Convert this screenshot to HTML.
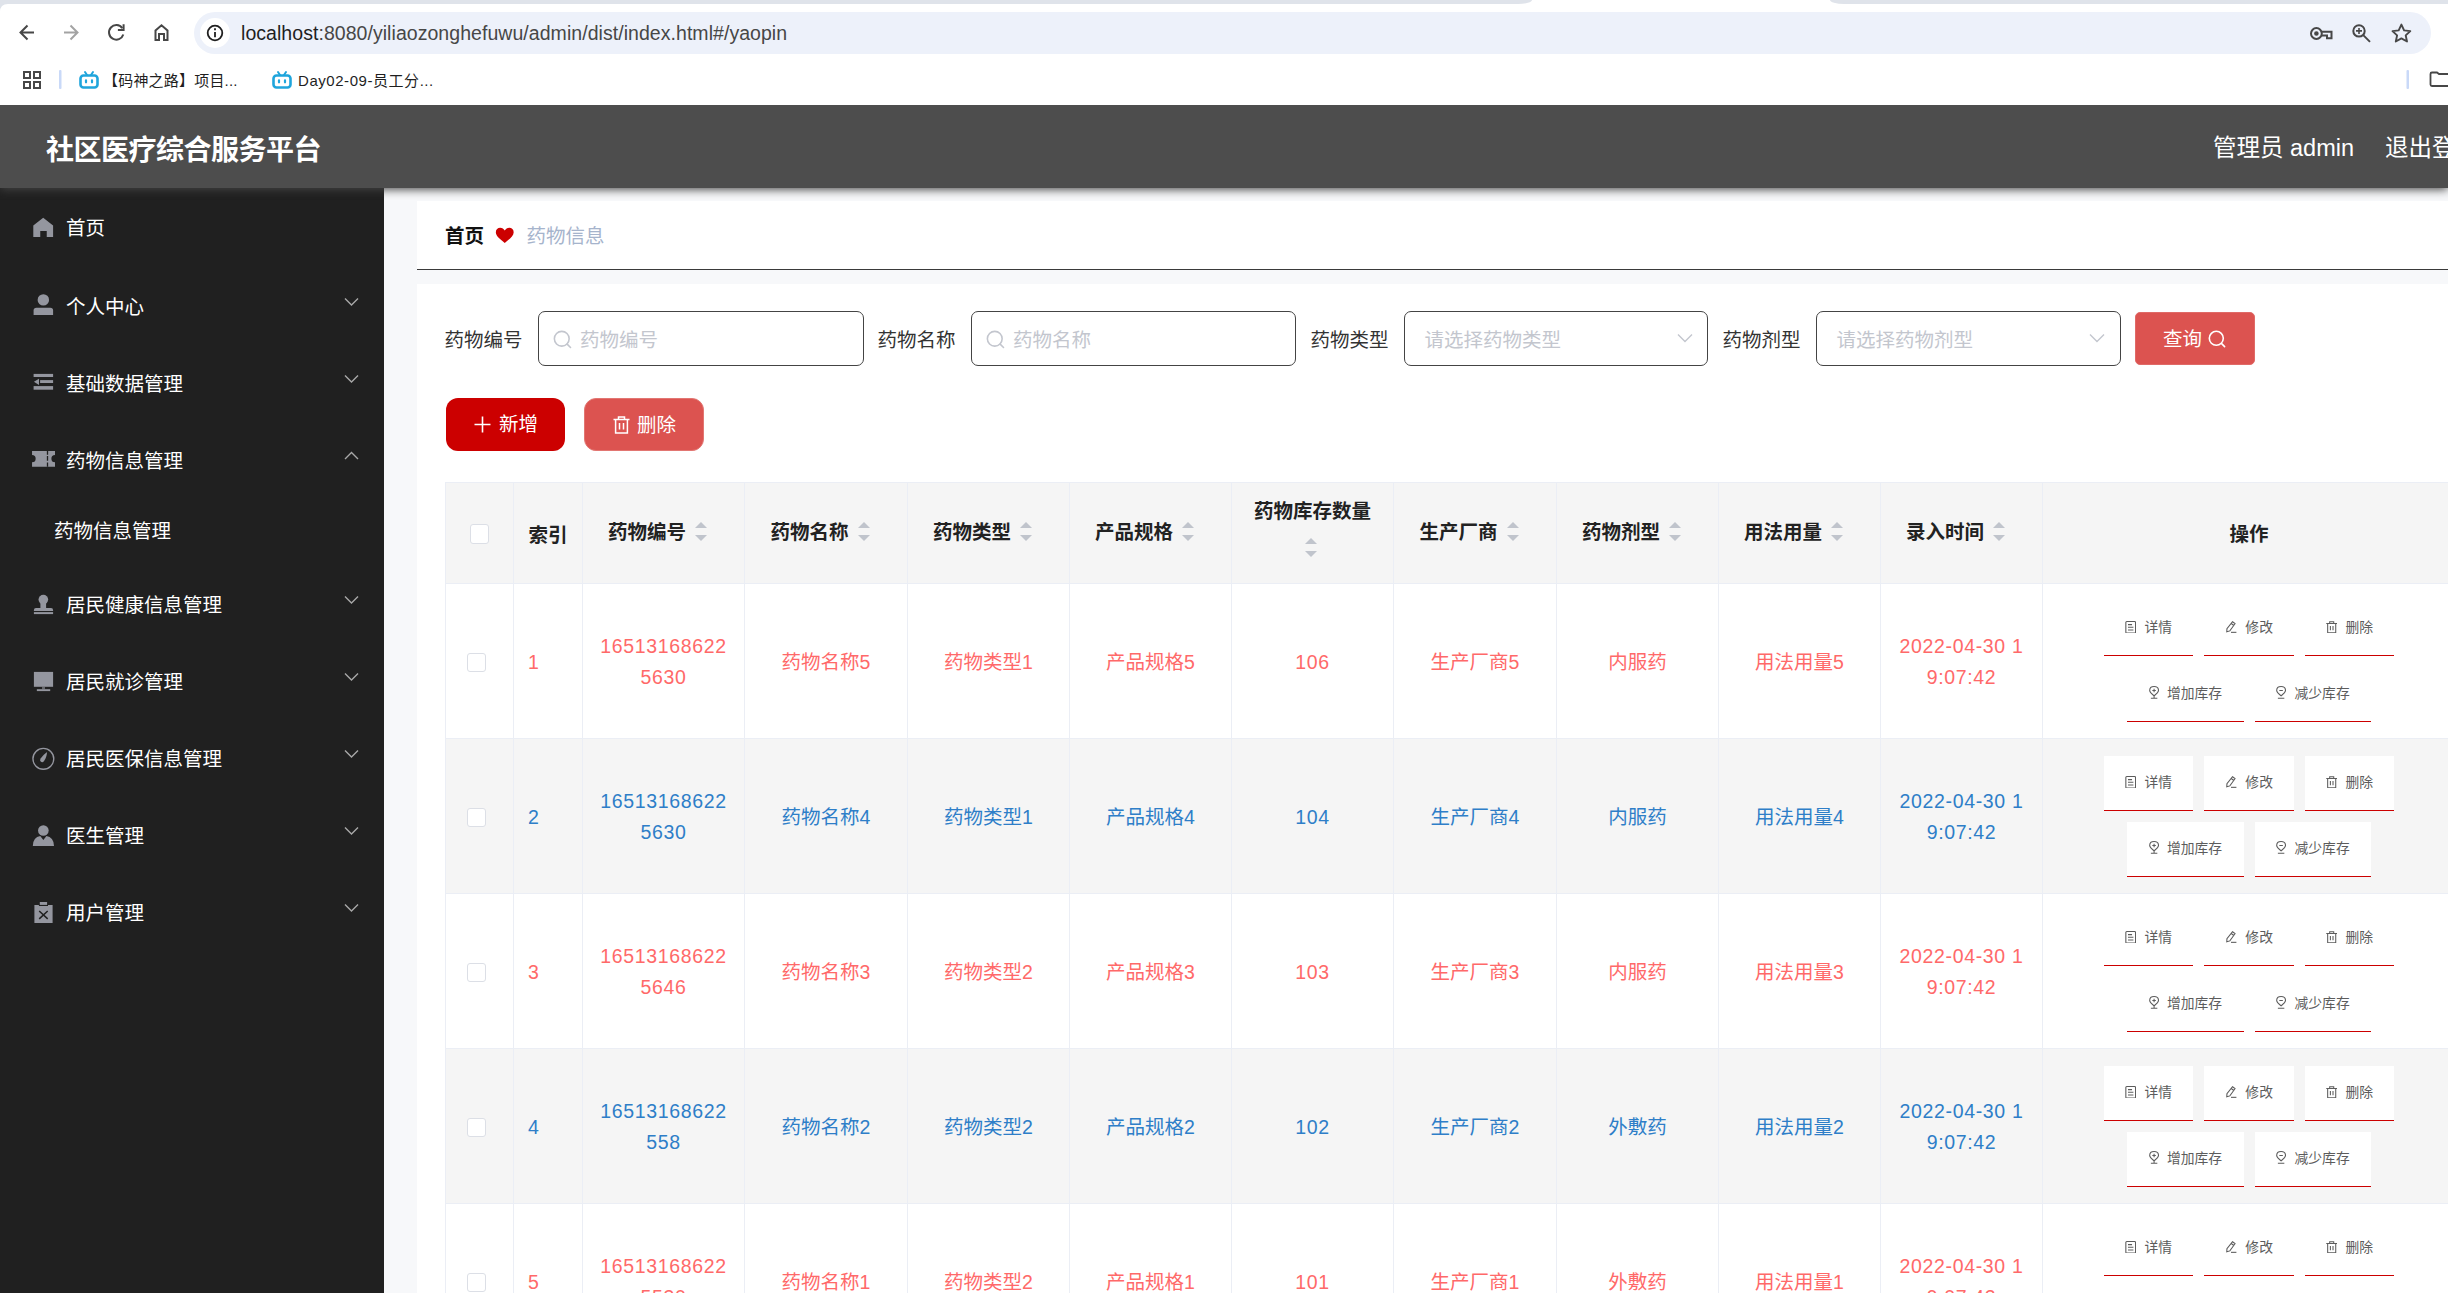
<!DOCTYPE html><html lang="zh-CN"><head><meta charset="utf-8"><title>社区医疗综合服务平台</title><style>
*{box-sizing:border-box;margin:0;padding:0}
html,body{width:2448px;height:1293px;overflow:hidden;background:#f7f8fa;font-family:"Liberation Sans","Noto Sans CJK SC",sans-serif;}
body{position:relative}
.abs{position:absolute}
/* browser chrome */
#strip{left:0;top:0;width:1532px;height:4px;background:#dfe3ea;border-bottom-right-radius:14px 4px}
#strip2{left:1830px;top:0;width:618px;height:4px;background:#dfe3ea;border-bottom-left-radius:14px 4px}
#chrome{left:0;top:0;width:2448px;height:105px;background:#fff}
#tabgap{left:1530px;top:0;width:300px;height:4px;background:#fff}
#pill{left:194px;top:12px;width:2236.5px;height:42px;border-radius:21px;background:#edf1fa}
#infoc{left:200px;top:18px;width:30px;height:30px;border-radius:15px;background:#fff}
#url{left:241px;top:20px;font-size:19.5px;line-height:26px;color:#1f1f1f;white-space:nowrap;letter-spacing:0.05px}
#url span{color:#474747}
.bm{font-size:15px;line-height:20px;color:#1f1f1f;white-space:nowrap;top:71px;letter-spacing:0.2px}
/* app */
#hdr{left:0;top:105px;width:2448px;height:83px;background:#4d4d4d;box-shadow:0 1.5px 9px #444;clip-path:inset(0 0 -30px 0);z-index:5}
#title{left:46px;top:128.5px;font-size:28px;line-height:44px;font-weight:bold;color:#fff;white-space:nowrap;z-index:6;letter-spacing:-0.5px}
#user{left:2213px;top:130px;font-size:23.5px;line-height:36px;color:#fff;white-space:nowrap;z-index:6}
#logout{left:2385px;top:130px;font-size:23.5px;line-height:36px;color:#fff;white-space:nowrap;z-index:6}
#side{left:0;top:188px;width:384px;height:1105px;background:#202020}
.mi{position:absolute;left:0;width:384px;height:77px;color:#fff;font-size:19.5px;line-height:77px;white-space:nowrap}
.mi .tx{position:absolute;left:66px;top:0}
.mi svg.ic{position:absolute;left:32px;top:28px;width:22px;height:22px}
.mi svg.ch{position:absolute;left:344px;top:28px;width:15px;height:10px}
#bc{left:417px;top:201px;width:2031px;height:69px;background:#fff;border-bottom:1px solid #3a3a3a}
#card{left:417px;top:284px;width:2031px;height:1009px;background:#fff}
.t195{font-size:19.5px;white-space:nowrap;line-height:28px}
.inp{position:absolute;top:311px;height:55px;border:1px solid #444;border-radius:7px;background:#fff}
.lbl{position:absolute;top:326px;font-size:19.5px;line-height:28px;color:#333;white-space:nowrap}
.ph{position:absolute;top:14px;font-size:19.5px;line-height:28px;color:#c3c6ce;white-space:nowrap}
.btn{position:absolute;color:#fff;font-size:19.5px;white-space:nowrap}

#tbl{left:445px;top:482px;width:2012px;border-top:1px solid #ebeef5;border-left:1px solid #ebeef5}
.tr{display:flex;width:2012px}
.tr.th{height:101px;background:#f5f5f5}
.tr.odd,.tr.even{height:155px}
.tr.odd{background:#fff;color:#ff6969}
.tr.even{background:#f5f5f5;color:#2e7ec8}
.td{border-right:1px solid #ebeef5;border-bottom:1px solid #ebeef5;display:flex;align-items:center;justify-content:center;text-align:center;flex:none;height:100%}
.td.c0{width:68px}
.td.c1{width:69px}
.td.c1.l{justify-content:flex-start;padding-left:14px}
.td.c1 .ht{padding-top:3px}
.td.cop .ht{padding-top:2px}
.td.cn{width:162px}
.td.w3{width:163px}
.td.cop{width:412.8px}
.ht{font-size:19.5px;font-weight:bold;color:#222;line-height:32px;white-space:nowrap}
.hc{display:inline-flex;align-items:center;padding-bottom:3px}
.hc2{display:flex;flex-direction:column;align-items:center;padding-bottom:1px}
.hc2 .cw{margin-top:-5px;top:1.5px}
.hc2 .ht{position:relative;top:-1.5px}
.cw{display:inline-flex;flex-direction:column;align-items:center;width:33px;height:46px;vertical-align:middle;position:relative}
.cw i{position:absolute;left:9.2px;width:0;height:0;border:6px solid transparent}
.cw i.up{border-bottom-color:#c0c4cc;top:7px}
.cw i.dn{border-top-color:#c0c4cc;top:26px}
.ct{font-size:19.5px;line-height:31px;padding-top:2px;display:block}
.ct.num{letter-spacing:0.65px}
.th .cb{margin-top:2px}
.cb{display:inline-block;width:19.5px;height:19.5px;border:1px solid #dcdfe6;border-radius:3px;background:#fff}
.ops{width:100%}
.l1,.l2{display:flex;justify-content:center;gap:10.8px}
.ops{padding-top:1.2px}
.l2{margin-top:10.9px}
.ab{display:inline-flex;align-items:center;justify-content:center;height:55.2px;background:#fff;border-bottom:1.5px solid #cc0000;font-size:13.8px;color:#5c5c5c;white-space:nowrap}
.ab svg{margin-right:8.3px;flex:none;position:relative;top:-1.2px}
.ab span{position:relative;top:-2px}
</style></head><body>
<div id="chrome" class="abs"></div><div id="strip" class="abs"></div><div id="strip2" class="abs"></div>
<div id="pill" class="abs"></div><div id="infoc" class="abs"></div><div id="url" class="abs">localhost<span>:8080/yiliaozonghefuwu/admin/dist/index.html#/yaopin</span></div><div class="bm abs" style="left:103px">【码神之路】项目...</div><div class="bm abs" style="left:298px;letter-spacing:0.55px">Day02-09-员工分...</div>
<svg class="abs" style="left:0;top:0" width="2448" height="105" viewBox="0 0 2448 105" fill="none">
<path d="M8 4 Q0 4 0 12 L0 4 Z" fill="#dfe3ea"/>
<g stroke="#474747" stroke-width="2" stroke-linecap="butt" stroke-linejoin="miter">
<path d="M34 32.5 H21 M27.5 25.5 L20.5 32.5 L27.5 39.5"/>
<path d="M64 32.5 H77 M70.5 25.5 L77.5 32.5 L70.5 39.5" stroke="#a3a3a3"/>
<path d="M122.3 28.2 A7.3 7.3 0 1 0 123.3 34.5"/>
<path d="M123.6 24.3 V30 H117.9" />
<path d="M155.5 40 V30.5 L161.5 25.3 L167.5 30.5 V40 H164 V34 H159 V40 Z"/>
</g>
<g stroke="#1f1f1f" stroke-width="1.8">
<circle cx="215" cy="33" r="7.3"/>
<path d="M215 32 V37.2"/><path d="M215 28.3 V30.3"/>
</g>
<!-- key -->
<g stroke="#474747" stroke-width="2">
<circle cx="2316.4" cy="33.5" r="5.4"/><circle cx="2316.4" cy="33.5" r="1.3" fill="#474747"/>
<path d="M2321.6 31.7 H2331.5 V38.3 H2327 V35.5 H2321.6"/>
</g>
<!-- zoom -->
<g stroke="#474747" stroke-width="2">
<circle cx="2359" cy="30.9" r="5.7"/><path d="M2363 34.9 L2370 41.9"/><path d="M2356 30.9 H2362 M2359 27.9 V33.9" stroke-width="1.6"/>
</g>
<!-- star -->
<path d="M2401.4 24.6 L2404.1 30.4 L2410.3 31.1 L2405.7 35.4 L2407 41.5 L2401.4 38.4 L2395.8 41.5 L2397.1 35.4 L2392.5 31.1 L2398.7 30.4 Z" stroke="#474747" stroke-width="1.9" stroke-linejoin="round"/>
<!-- apps grid -->
<g stroke="#474747" stroke-width="2">
<rect x="24" y="72" width="6" height="6"/><rect x="34" y="72" width="6" height="6"/><rect x="24" y="82" width="6" height="6"/><rect x="34" y="82" width="6" height="6"/>
</g>
<rect x="59" y="70" width="2.5" height="19" rx="1" fill="#c9d9f8"/>
<rect x="2406.5" y="70" width="2.5" height="19" rx="1" fill="#c9d9f8"/>
<!-- folder -->
<path d="M2450 74 H2439 L2437 72.5 H2432 Q2430.5 72.5 2430.5 74 V84.5 Q2430.5 86 2432 86 H2450" stroke="#474747" stroke-width="1.8"/>
<!-- bilibili icons -->
<g id="bili1" stroke="#1fa5dc" stroke-width="2.6" stroke-linejoin="round" stroke-linecap="round">
<rect x="80.5" y="75.5" width="17" height="12" rx="3"/>
<path d="M85 72 L87 75 M93 72 L91 75" stroke-width="2"/>
<path d="M86 80.3 V82.3 M92 80.3 V82.3" stroke-width="2.2"/>
</g>
<g stroke="#1fa5dc" stroke-width="2.6" stroke-linejoin="round" stroke-linecap="round" transform="translate(193 0)">
<rect x="80.5" y="75.5" width="17" height="12" rx="3"/>
<path d="M85 72 L87 75 M93 72 L91 75" stroke-width="2"/>
<path d="M86 80.3 V82.3 M92 80.3 V82.3" stroke-width="2.2"/>
</g>
</svg>
<div id="hdr" class="abs"></div>
<div id="title" class="abs">社区医疗综合服务平台</div>
<div id="user" class="abs">管理员 admin</div><div id="logout" class="abs">退出登录</div>
<div id="side" class="abs"><svg class="abs" style="left:0;top:0" width="384" height="1105" viewBox="0 188 384 1105">
<g fill="#94969f">
<path d="M33.3 237.1 V225.5 L43.2 217.7 L53.1 225.5 V237.1 H46.75 V231 H40.25 V237.1 Z"/>
<circle cx="43.35" cy="299.9" r="5.7"/>
<path d="M33.6 315 V310.5 Q33.6 307.75 36.4 307.75 H50.3 Q53.1 307.75 53.1 310.5 V315 Z"/>
<rect x="33.6" y="373.9" width="19.5" height="3.1"/><rect x="40.1" y="380.1" width="13" height="2.9"/><rect x="33.6" y="386.1" width="19.5" height="3.6"/>
<path d="M33.9 381.8 L39 378.7 V384.9 Z"/>
<path d="M32.05 450.9 H55 V455.1 A3.6 3.6 0 0 0 55 462.3 V466.7 H32.05 V462.3 A3.6 3.6 0 0 0 32.05 455.1 Z"/>
<circle cx="43.35" cy="599.55" r="4.8"/>
<path d="M40.4 602 H46.1 V608.1 H51 Q53.1 608.1 53.1 610.2 V611 H33.9 V610.2 Q33.9 608.1 36 608.1 H40.4 Z"/>
<rect x="33.9" y="612.1" width="19.2" height="2"/>
<rect x="33.9" y="671.9" width="19.2" height="14.9"/><rect x="42" y="686.8" width="3" height="2.4" opacity="0.6"/><rect x="36.85" y="689.2" width="13.35" height="1.9"/>
<path d="M47.1 752 Q46.5 758 43.9 761.2 Q42.4 762.9 40.7 761.6 Q39.4 760.3 40.6 758.4 Q43 755 47.1 752 Z"/>
<circle cx="43.35" cy="830.55" r="5.3"/>
<path d="M32.8 846 Q33.2 837 40.25 836.1 L43.35 840 L46.45 836.1 Q53.6 837 54 846 Z"/>
<path d="M34.4 904.9 H38.9 V906 H48 V904.9 H52.6 V923 H34.4 Z"/>
<rect x="39.8" y="902" width="7.3" height="2.9"/>
</g>
<circle cx="43.35" cy="758.8" r="10.4" fill="none" stroke="#94969f" stroke-width="1.4"/>
<path d="M47.5 450.9 V454.8 M47.5 456 V460.7 M47.5 462.5 V466.7" stroke="#202020" stroke-width="1.3"/>
<path d="M39.2 911 L47.7 918.85 M47.7 911 L39.2 918.85" stroke="#202020" stroke-width="1.5"/>
</svg>
<div class="mi" style="top:1.5px"><span class="tx">首页</span></div>
<div class="mi" style="top:80.5px"><span class="tx">个人中心</span><svg class="ch" viewBox="0 0 15 10"><path d="M1 1.5 L7.5 8 L14 1.5" fill="none" stroke="#a8a8a8" stroke-width="1.4"/></svg></div>
<div class="mi" style="top:157.5px"><span class="tx">基础数据管理</span><svg class="ch" viewBox="0 0 15 10"><path d="M1 1.5 L7.5 8 L14 1.5" fill="none" stroke="#a8a8a8" stroke-width="1.4"/></svg></div>
<div class="mi" style="top:234.5px"><span class="tx">药物信息管理</span><svg class="ch" viewBox="0 0 15 10"><path d="M1 8 L7.5 1.5 L14 8" fill="none" stroke="#a8a8a8" stroke-width="1.4"/></svg></div>
<div class="mi" style="top:309.5px;height:66px;line-height:66px"><span class="tx" style="left:54px">药物信息管理</span></div>
<div class="mi" style="top:379px"><span class="tx">居民健康信息管理</span><svg class="ch" viewBox="0 0 15 10"><path d="M1 1.5 L7.5 8 L14 1.5" fill="none" stroke="#a8a8a8" stroke-width="1.4"/></svg></div>
<div class="mi" style="top:456px"><span class="tx">居民就诊管理</span><svg class="ch" viewBox="0 0 15 10"><path d="M1 1.5 L7.5 8 L14 1.5" fill="none" stroke="#a8a8a8" stroke-width="1.4"/></svg></div>
<div class="mi" style="top:533px"><span class="tx">居民医保信息管理</span><svg class="ch" viewBox="0 0 15 10"><path d="M1 1.5 L7.5 8 L14 1.5" fill="none" stroke="#a8a8a8" stroke-width="1.4"/></svg></div>
<div class="mi" style="top:610px"><span class="tx">医生管理</span><svg class="ch" viewBox="0 0 15 10"><path d="M1 1.5 L7.5 8 L14 1.5" fill="none" stroke="#a8a8a8" stroke-width="1.4"/></svg></div>
<div class="mi" style="top:687px"><span class="tx">用户管理</span><svg class="ch" viewBox="0 0 15 10"><path d="M1 1.5 L7.5 8 L14 1.5" fill="none" stroke="#a8a8a8" stroke-width="1.4"/></svg></div>
</div>
<div id="bc" class="abs"></div>
<div class="abs t195" style="left:445px;top:222px;font-weight:bold;color:#111">首页</div>
<svg class="abs" style="left:494.5px;top:227px" width="19.5" height="16.5" viewBox="0 0 19 16"><path d="M9.5 15.5 C6 12.5 0.8 9 0.8 5 C0.8 2.2 2.8 0.6 5 0.6 C7 0.6 8.6 1.8 9.5 3.4 C10.4 1.8 12 0.6 14 0.6 C16.2 0.6 18.2 2.2 18.2 5 C18.2 9 13 12.5 9.5 15.5 Z" fill="#cc0000"/></svg>
<div class="abs t195" style="left:526.5px;top:222px;color:#a6b4cc">药物信息</div>
<div id="card" class="abs"></div>
<div class="lbl" style="left:444.5px">药物编号</div>
<div class="lbl" style="left:877.5px">药物名称</div>
<div class="lbl" style="left:1310.5px">药物类型</div>
<div class="lbl" style="left:1722.5px">药物剂型</div>
<div class="inp" style="left:538px;width:326px"><svg class="abs" style="left:13.5px;top:17.5px" width="19" height="19" viewBox="0 0 18 18" fill="none" stroke="#c3c6ce" stroke-width="1.5"><circle cx="8.3" cy="8.3" r="7"/><path d="M13.4 13.4 L16.6 16.6" stroke-linecap="round"/></svg><span class="ph" style="left:41px">药物编号</span></div>
<div class="inp" style="left:971px;width:325px"><svg class="abs" style="left:13.5px;top:17.5px" width="19" height="19" viewBox="0 0 18 18" fill="none" stroke="#c3c6ce" stroke-width="1.5"><circle cx="8.3" cy="8.3" r="7"/><path d="M13.4 13.4 L16.6 16.6" stroke-linecap="round"/></svg><span class="ph" style="left:41px">药物名称</span></div>
<div class="inp" style="left:1404px;width:304px"><span class="ph" style="left:19.5px">请选择药物类型</span><svg class="abs" style="left:272px;top:21px" width="16" height="11" viewBox="0 0 16 11"><path d="M1 1.5 L8 8.5 L15 1.5" fill="none" stroke="#c3c6ce" stroke-width="1.4"/></svg></div>
<div class="inp" style="left:1816px;width:305px"><span class="ph" style="left:19.5px">请选择药物剂型</span><svg class="abs" style="left:272px;top:21px" width="16" height="11" viewBox="0 0 16 11"><path d="M1 1.5 L8 8.5 L15 1.5" fill="none" stroke="#c3c6ce" stroke-width="1.4"/></svg></div>
<div class="btn" style="left:2135px;top:312px;width:120px;height:53px;background:#dc5350;border-radius:5px;border:1px solid #e06a67"><span class="abs" style="left:27px;top:12px;line-height:28px">查询</span><svg class="abs" style="left:72px;top:17px" width="18" height="18" viewBox="0 0 18 18" fill="none" stroke="#fff" stroke-width="1.6"><circle cx="8.3" cy="8.3" r="7"/><path d="M13.4 13.4 L16.6 16.6" stroke-linecap="round"/></svg></div>
<div class="btn" style="left:446px;top:398px;width:119px;height:53px;background:#cc0000;border-radius:12px"><svg class="abs" style="left:28px;top:18px" width="17" height="17" viewBox="0 0 17 17"><path d="M8.5 0.5 V16.5 M0.5 8.5 H16.5" stroke="#fff" stroke-width="1.6"/></svg><span class="abs" style="left:53px;top:12px;line-height:28px">新增</span></div>
<div class="btn" style="left:584px;top:398px;width:120px;height:53px;background:#dc5350;border-radius:12px;border:1px solid #e27672"><svg class="abs" style="left:28px;top:17px" width="17" height="18" viewBox="0 0 17 18" fill="none" stroke="#fff" stroke-width="1.5"><path d="M0.5 3.6 H16.5 M5.5 3.4 V1 H11.5 V3.4 M2.6 3.8 V17 H14.4 V3.8 M6.5 7 V13.6 M10.5 7 V13.6"/></svg><span class="abs" style="left:52px;top:12px;line-height:28px">删除</span></div>
<div id="tbl" class="abs">
<div class="tr th">
<div class="td c0"><span class="cb"></span></div>
<div class="td c1"><span class="ht">索引</span></div>
<div class="td cn"><div class="hc"><span class="ht">药物编号</span><span class="cw"><i class="up"></i><i class="dn"></i></span></div></div>
<div class="td cn w3"><div class="hc"><span class="ht">药物名称</span><span class="cw"><i class="up"></i><i class="dn"></i></span></div></div>
<div class="td cn"><div class="hc"><span class="ht">药物类型</span><span class="cw"><i class="up"></i><i class="dn"></i></span></div></div>
<div class="td cn"><div class="hc"><span class="ht">产品规格</span><span class="cw"><i class="up"></i><i class="dn"></i></span></div></div>
<div class="td cn"><div class="hc2"><span class="ht">药物库存数量</span><span class="cw"><i class="up"></i><i class="dn"></i></span></div></div>
<div class="td cn w3"><div class="hc"><span class="ht">生产厂商</span><span class="cw"><i class="up"></i><i class="dn"></i></span></div></div>
<div class="td cn"><div class="hc"><span class="ht">药物剂型</span><span class="cw"><i class="up"></i><i class="dn"></i></span></div></div>
<div class="td cn"><div class="hc"><span class="ht">用法用量</span><span class="cw"><i class="up"></i><i class="dn"></i></span></div></div>
<div class="td cn"><div class="hc"><span class="ht">录入时间</span><span class="cw"><i class="up"></i><i class="dn"></i></span></div></div>
<div class="td cop"><span class="ht">操作</span></div>
</div>
<div class="tr odd">
<div class="td c0"><span class="cb" style="margin-right:6px;margin-top:3px"></span></div>
<div class="td c1 l"><span class="ct">1</span></div>
<div class="td cn"><span class="ct num">16513168622<br>5630</span></div>
<div class="td cn w3"><span class="ct">药物名称5</span></div>
<div class="td cn"><span class="ct">药物类型1</span></div>
<div class="td cn"><span class="ct">产品规格5</span></div>
<div class="td cn"><span class="ct num">106</span></div>
<div class="td cn w3"><span class="ct">生产厂商5</span></div>
<div class="td cn"><span class="ct">内服药</span></div>
<div class="td cn"><span class="ct">用法用量5</span></div>
<div class="td cn"><span class="ct num">2022-04-30 1<br>9:07:42</span></div>
<div class="td cop"><div class="ops"><div class="l1"><span class="ab" style="width:89.2px"><svg width="11.4" height="12.6" viewBox="0 0 12 14" fill="none" stroke="#5c5c5c" stroke-width="1.2"><rect x="0.6" y="0.6" width="10.8" height="12.8" rx="1"/><path d="M3 4 H7.5 M3 7 H9 M3 10 H9"/></svg><span>详情</span></span><span class="ab" style="width:90.3px"><svg width="12" height="12.6" viewBox="0 0 13 14" fill="none" stroke="#5c5c5c" stroke-width="1.2"><path d="M8.2 0.8 L11 3 L5.2 11 L1.8 12 L2 8.6 Z M6.8 2.8 L9.6 5"/><path d="M6.5 12.6 H12.5"/></svg><span>修改</span></span><span class="ab" style="width:89px"><svg width="11.4" height="12.4" viewBox="0 0 13 14" fill="none" stroke="#5c5c5c" stroke-width="1.2"><path d="M0.3 2.8 H12.7 M4.2 2.6 V0.7 H8.8 V2.6 M1.9 3 V13.3 H11.1 V3 M5 5.5 V10.6 M8 5.5 V10.6"/></svg><span>删除</span></span></div><div class="l2"><span class="ab" style="width:117.2px"><svg width="10.2" height="12.9" viewBox="0 0 11 14" fill="none" stroke="#5c5c5c" stroke-width="1.15"><path d="M5.5 10.6 C3 8.6 0.7 7.2 0.7 4.9 C0.7 2.4 2.8 0.6 5.5 0.6 C8.2 0.6 10.3 2.4 10.3 4.9 C10.3 7.2 8 8.6 5.5 10.6 Z M2 13.3 H9 M5.5 10.8 V13.3 M3.6 4.9 H7.4 M5.5 3 V6.8"/></svg><span>增加库存</span></span><span class="ab" style="width:116.3px"><svg width="10.2" height="12.9" viewBox="0 0 11 14" fill="none" stroke="#5c5c5c" stroke-width="1.15"><path d="M5.5 10.6 C3 8.6 0.7 7.2 0.7 4.9 C0.7 2.4 2.8 0.6 5.5 0.6 C8.2 0.6 10.3 2.4 10.3 4.9 C10.3 7.2 8 8.6 5.5 10.6 Z M2 13.3 H9 M3.6 4.9 H7.4"/></svg><span>减少库存</span></span></div></div></div>
</div>
<div class="tr even">
<div class="td c0"><span class="cb" style="margin-right:6px;margin-top:3px"></span></div>
<div class="td c1 l"><span class="ct">2</span></div>
<div class="td cn"><span class="ct num">16513168622<br>5630</span></div>
<div class="td cn w3"><span class="ct">药物名称4</span></div>
<div class="td cn"><span class="ct">药物类型1</span></div>
<div class="td cn"><span class="ct">产品规格4</span></div>
<div class="td cn"><span class="ct num">104</span></div>
<div class="td cn w3"><span class="ct">生产厂商4</span></div>
<div class="td cn"><span class="ct">内服药</span></div>
<div class="td cn"><span class="ct">用法用量4</span></div>
<div class="td cn"><span class="ct num">2022-04-30 1<br>9:07:42</span></div>
<div class="td cop"><div class="ops"><div class="l1"><span class="ab" style="width:89.2px"><svg width="11.4" height="12.6" viewBox="0 0 12 14" fill="none" stroke="#5c5c5c" stroke-width="1.2"><rect x="0.6" y="0.6" width="10.8" height="12.8" rx="1"/><path d="M3 4 H7.5 M3 7 H9 M3 10 H9"/></svg><span>详情</span></span><span class="ab" style="width:90.3px"><svg width="12" height="12.6" viewBox="0 0 13 14" fill="none" stroke="#5c5c5c" stroke-width="1.2"><path d="M8.2 0.8 L11 3 L5.2 11 L1.8 12 L2 8.6 Z M6.8 2.8 L9.6 5"/><path d="M6.5 12.6 H12.5"/></svg><span>修改</span></span><span class="ab" style="width:89px"><svg width="11.4" height="12.4" viewBox="0 0 13 14" fill="none" stroke="#5c5c5c" stroke-width="1.2"><path d="M0.3 2.8 H12.7 M4.2 2.6 V0.7 H8.8 V2.6 M1.9 3 V13.3 H11.1 V3 M5 5.5 V10.6 M8 5.5 V10.6"/></svg><span>删除</span></span></div><div class="l2"><span class="ab" style="width:117.2px"><svg width="10.2" height="12.9" viewBox="0 0 11 14" fill="none" stroke="#5c5c5c" stroke-width="1.15"><path d="M5.5 10.6 C3 8.6 0.7 7.2 0.7 4.9 C0.7 2.4 2.8 0.6 5.5 0.6 C8.2 0.6 10.3 2.4 10.3 4.9 C10.3 7.2 8 8.6 5.5 10.6 Z M2 13.3 H9 M5.5 10.8 V13.3 M3.6 4.9 H7.4 M5.5 3 V6.8"/></svg><span>增加库存</span></span><span class="ab" style="width:116.3px"><svg width="10.2" height="12.9" viewBox="0 0 11 14" fill="none" stroke="#5c5c5c" stroke-width="1.15"><path d="M5.5 10.6 C3 8.6 0.7 7.2 0.7 4.9 C0.7 2.4 2.8 0.6 5.5 0.6 C8.2 0.6 10.3 2.4 10.3 4.9 C10.3 7.2 8 8.6 5.5 10.6 Z M2 13.3 H9 M3.6 4.9 H7.4"/></svg><span>减少库存</span></span></div></div></div>
</div>
<div class="tr odd">
<div class="td c0"><span class="cb" style="margin-right:6px;margin-top:3px"></span></div>
<div class="td c1 l"><span class="ct">3</span></div>
<div class="td cn"><span class="ct num">16513168622<br>5646</span></div>
<div class="td cn w3"><span class="ct">药物名称3</span></div>
<div class="td cn"><span class="ct">药物类型2</span></div>
<div class="td cn"><span class="ct">产品规格3</span></div>
<div class="td cn"><span class="ct num">103</span></div>
<div class="td cn w3"><span class="ct">生产厂商3</span></div>
<div class="td cn"><span class="ct">内服药</span></div>
<div class="td cn"><span class="ct">用法用量3</span></div>
<div class="td cn"><span class="ct num">2022-04-30 1<br>9:07:42</span></div>
<div class="td cop"><div class="ops"><div class="l1"><span class="ab" style="width:89.2px"><svg width="11.4" height="12.6" viewBox="0 0 12 14" fill="none" stroke="#5c5c5c" stroke-width="1.2"><rect x="0.6" y="0.6" width="10.8" height="12.8" rx="1"/><path d="M3 4 H7.5 M3 7 H9 M3 10 H9"/></svg><span>详情</span></span><span class="ab" style="width:90.3px"><svg width="12" height="12.6" viewBox="0 0 13 14" fill="none" stroke="#5c5c5c" stroke-width="1.2"><path d="M8.2 0.8 L11 3 L5.2 11 L1.8 12 L2 8.6 Z M6.8 2.8 L9.6 5"/><path d="M6.5 12.6 H12.5"/></svg><span>修改</span></span><span class="ab" style="width:89px"><svg width="11.4" height="12.4" viewBox="0 0 13 14" fill="none" stroke="#5c5c5c" stroke-width="1.2"><path d="M0.3 2.8 H12.7 M4.2 2.6 V0.7 H8.8 V2.6 M1.9 3 V13.3 H11.1 V3 M5 5.5 V10.6 M8 5.5 V10.6"/></svg><span>删除</span></span></div><div class="l2"><span class="ab" style="width:117.2px"><svg width="10.2" height="12.9" viewBox="0 0 11 14" fill="none" stroke="#5c5c5c" stroke-width="1.15"><path d="M5.5 10.6 C3 8.6 0.7 7.2 0.7 4.9 C0.7 2.4 2.8 0.6 5.5 0.6 C8.2 0.6 10.3 2.4 10.3 4.9 C10.3 7.2 8 8.6 5.5 10.6 Z M2 13.3 H9 M5.5 10.8 V13.3 M3.6 4.9 H7.4 M5.5 3 V6.8"/></svg><span>增加库存</span></span><span class="ab" style="width:116.3px"><svg width="10.2" height="12.9" viewBox="0 0 11 14" fill="none" stroke="#5c5c5c" stroke-width="1.15"><path d="M5.5 10.6 C3 8.6 0.7 7.2 0.7 4.9 C0.7 2.4 2.8 0.6 5.5 0.6 C8.2 0.6 10.3 2.4 10.3 4.9 C10.3 7.2 8 8.6 5.5 10.6 Z M2 13.3 H9 M3.6 4.9 H7.4"/></svg><span>减少库存</span></span></div></div></div>
</div>
<div class="tr even">
<div class="td c0"><span class="cb" style="margin-right:6px;margin-top:3px"></span></div>
<div class="td c1 l"><span class="ct">4</span></div>
<div class="td cn"><span class="ct num">16513168622<br>558</span></div>
<div class="td cn w3"><span class="ct">药物名称2</span></div>
<div class="td cn"><span class="ct">药物类型2</span></div>
<div class="td cn"><span class="ct">产品规格2</span></div>
<div class="td cn"><span class="ct num">102</span></div>
<div class="td cn w3"><span class="ct">生产厂商2</span></div>
<div class="td cn"><span class="ct">外敷药</span></div>
<div class="td cn"><span class="ct">用法用量2</span></div>
<div class="td cn"><span class="ct num">2022-04-30 1<br>9:07:42</span></div>
<div class="td cop"><div class="ops"><div class="l1"><span class="ab" style="width:89.2px"><svg width="11.4" height="12.6" viewBox="0 0 12 14" fill="none" stroke="#5c5c5c" stroke-width="1.2"><rect x="0.6" y="0.6" width="10.8" height="12.8" rx="1"/><path d="M3 4 H7.5 M3 7 H9 M3 10 H9"/></svg><span>详情</span></span><span class="ab" style="width:90.3px"><svg width="12" height="12.6" viewBox="0 0 13 14" fill="none" stroke="#5c5c5c" stroke-width="1.2"><path d="M8.2 0.8 L11 3 L5.2 11 L1.8 12 L2 8.6 Z M6.8 2.8 L9.6 5"/><path d="M6.5 12.6 H12.5"/></svg><span>修改</span></span><span class="ab" style="width:89px"><svg width="11.4" height="12.4" viewBox="0 0 13 14" fill="none" stroke="#5c5c5c" stroke-width="1.2"><path d="M0.3 2.8 H12.7 M4.2 2.6 V0.7 H8.8 V2.6 M1.9 3 V13.3 H11.1 V3 M5 5.5 V10.6 M8 5.5 V10.6"/></svg><span>删除</span></span></div><div class="l2"><span class="ab" style="width:117.2px"><svg width="10.2" height="12.9" viewBox="0 0 11 14" fill="none" stroke="#5c5c5c" stroke-width="1.15"><path d="M5.5 10.6 C3 8.6 0.7 7.2 0.7 4.9 C0.7 2.4 2.8 0.6 5.5 0.6 C8.2 0.6 10.3 2.4 10.3 4.9 C10.3 7.2 8 8.6 5.5 10.6 Z M2 13.3 H9 M5.5 10.8 V13.3 M3.6 4.9 H7.4 M5.5 3 V6.8"/></svg><span>增加库存</span></span><span class="ab" style="width:116.3px"><svg width="10.2" height="12.9" viewBox="0 0 11 14" fill="none" stroke="#5c5c5c" stroke-width="1.15"><path d="M5.5 10.6 C3 8.6 0.7 7.2 0.7 4.9 C0.7 2.4 2.8 0.6 5.5 0.6 C8.2 0.6 10.3 2.4 10.3 4.9 C10.3 7.2 8 8.6 5.5 10.6 Z M2 13.3 H9 M3.6 4.9 H7.4"/></svg><span>减少库存</span></span></div></div></div>
</div>
<div class="tr odd">
<div class="td c0"><span class="cb" style="margin-right:6px;margin-top:3px"></span></div>
<div class="td c1 l"><span class="ct">5</span></div>
<div class="td cn"><span class="ct num">16513168622<br>5530</span></div>
<div class="td cn w3"><span class="ct">药物名称1</span></div>
<div class="td cn"><span class="ct">药物类型2</span></div>
<div class="td cn"><span class="ct">产品规格1</span></div>
<div class="td cn"><span class="ct num">101</span></div>
<div class="td cn w3"><span class="ct">生产厂商1</span></div>
<div class="td cn"><span class="ct">外敷药</span></div>
<div class="td cn"><span class="ct">用法用量1</span></div>
<div class="td cn"><span class="ct num">2022-04-30 1<br>9:07:42</span></div>
<div class="td cop"><div class="ops"><div class="l1"><span class="ab" style="width:89.2px"><svg width="11.4" height="12.6" viewBox="0 0 12 14" fill="none" stroke="#5c5c5c" stroke-width="1.2"><rect x="0.6" y="0.6" width="10.8" height="12.8" rx="1"/><path d="M3 4 H7.5 M3 7 H9 M3 10 H9"/></svg><span>详情</span></span><span class="ab" style="width:90.3px"><svg width="12" height="12.6" viewBox="0 0 13 14" fill="none" stroke="#5c5c5c" stroke-width="1.2"><path d="M8.2 0.8 L11 3 L5.2 11 L1.8 12 L2 8.6 Z M6.8 2.8 L9.6 5"/><path d="M6.5 12.6 H12.5"/></svg><span>修改</span></span><span class="ab" style="width:89px"><svg width="11.4" height="12.4" viewBox="0 0 13 14" fill="none" stroke="#5c5c5c" stroke-width="1.2"><path d="M0.3 2.8 H12.7 M4.2 2.6 V0.7 H8.8 V2.6 M1.9 3 V13.3 H11.1 V3 M5 5.5 V10.6 M8 5.5 V10.6"/></svg><span>删除</span></span></div><div class="l2"><span class="ab" style="width:117.2px"><svg width="10.2" height="12.9" viewBox="0 0 11 14" fill="none" stroke="#5c5c5c" stroke-width="1.15"><path d="M5.5 10.6 C3 8.6 0.7 7.2 0.7 4.9 C0.7 2.4 2.8 0.6 5.5 0.6 C8.2 0.6 10.3 2.4 10.3 4.9 C10.3 7.2 8 8.6 5.5 10.6 Z M2 13.3 H9 M5.5 10.8 V13.3 M3.6 4.9 H7.4 M5.5 3 V6.8"/></svg><span>增加库存</span></span><span class="ab" style="width:116.3px"><svg width="10.2" height="12.9" viewBox="0 0 11 14" fill="none" stroke="#5c5c5c" stroke-width="1.15"><path d="M5.5 10.6 C3 8.6 0.7 7.2 0.7 4.9 C0.7 2.4 2.8 0.6 5.5 0.6 C8.2 0.6 10.3 2.4 10.3 4.9 C10.3 7.2 8 8.6 5.5 10.6 Z M2 13.3 H9 M3.6 4.9 H7.4"/></svg><span>减少库存</span></span></div></div></div>
</div>
</div>
</body></html>
